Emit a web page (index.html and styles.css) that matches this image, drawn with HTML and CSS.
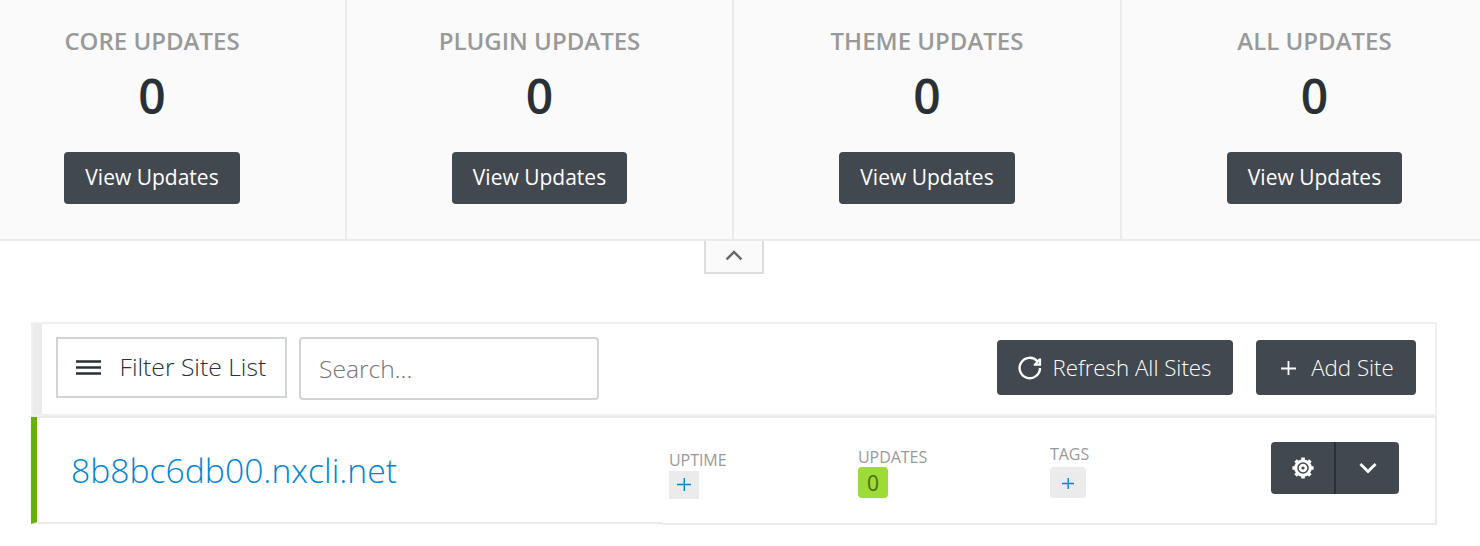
FILE: index.html
```html
<!DOCTYPE html>
<html lang="en">
<head>
  <meta charset="UTF-8">
  <title>Sites</title>
  <link rel="stylesheet" href="styles.css">
</head>
<body>
  <!-- Update totals -->
  <section class="totals">
    <div class="total">
      <h3>CORE UPDATES</h3>
      <div class="count">0</div>
      <a class="btn btn-view">View Updates</a>
    </div>
    <div class="total">
      <h3>PLUGIN UPDATES</h3>
      <div class="count">0</div>
      <a class="btn btn-view">View Updates</a>
    </div>
    <div class="total">
      <h3>THEME UPDATES</h3>
      <div class="count">0</div>
      <a class="btn btn-view">View Updates</a>
    </div>
    <div class="total">
      <h3>ALL UPDATES</h3>
      <div class="count">0</div>
      <a class="btn btn-view">View Updates</a>
    </div>
  </section>
  <div class="collapse">
    <svg width="18" height="11" viewBox="0 0 18 11"><path d="M1.6 9.4 9 2l7.4 7.4" fill="none" stroke="#666" stroke-width="2.4"/></svg>
  </div>

  <main class="sites">
    <!-- Toolbar -->
    <div class="toolbar">
      <div class="btn-filter">
        <svg width="25" height="16" viewBox="0 0 25 16"><path d="M0 1.5h25M0 7.5h25M0 13.5h25" stroke="#293036" stroke-width="2.3"/></svg>
        <span>Filter Site List</span>
      </div>
      <input class="search" type="text" placeholder="Search...">
      <div class="actions">
        <a class="btn btn-refresh">
          <svg width="24" height="24" viewBox="0 0 24 24"><path d="M22 12A10.2 10.2 0 1 1 19.4 5.2" fill="none" stroke="#fff" stroke-width="2.4"/><path d="M22 2.6v6h-6.2M21.5 3.5l-4 4.4" fill="none" stroke="#fff" stroke-width="2.2"/></svg>
          <span>Refresh All Sites</span>
        </a>
        <a class="btn btn-add">
          <svg width="15" height="15" viewBox="0 0 15 15"><path d="M0 8.5h15M7.5 1v14" stroke="#fff" stroke-width="1.8"/></svg>
          <span>Add Site</span>
        </a>
      </div>
    </div>

    <!-- Site row -->
    <div class="site">
      <div class="site-name"><a>8b8bc6db00.nxcli.net</a></div>
      <div class="site-info">
        <div class="cell uptime">
          <label>UPTIME</label>
          <span class="plus"><svg width="14" height="14" viewBox="0 0 14 14"><path d="M0 6.5h14M7.3 0v13" stroke="#0085d5" stroke-width="1.4"/></svg></span>
        </div>
        <div class="cell updates">
          <label>UPDATES</label>
          <span class="badge">0</span>
        </div>
        <div class="cell tags">
          <label>TAGS</label>
          <span class="plus"><svg width="12" height="12" viewBox="0 0 12 12"><path d="M0 6.5h12M6.2 1v11" stroke="#0085d5" stroke-width="1.4"/></svg></span>
        </div>
        <div class="btn-group">
          <a class="btn">
            <svg width="22" height="22" viewBox="-11 -11 22 22">
              <circle r="8.8" fill="#fff"/>
              <path d="M0-10.6V10.6M-10.6 0H10.6M-7.4-7.4 7.4 7.4M7.4-7.4-7.4 7.4" stroke="#fff" stroke-width="3.6"/>
              <circle r="5" fill="none" stroke="#42484f" stroke-width="1.5"/>
              <circle r="1.6" fill="#42484f"/>
            </svg>
          </a>
          <a class="btn">
            <svg width="18" height="12" viewBox="0 0 18 12"><path d="M1.4 2 9 9.6 16.6 2" fill="none" stroke="#fff" stroke-width="2.8"/></svg>
          </a>
        </div>
      </div>
    </div>
  </main>
</body>
</html>
```

FILE: styles.css
```css
body {
  margin: 0;
  font-family: 'Open Sans', sans-serif;
  font-weight: 300;
  color: #293036;
  background: #fff;
  overflow: hidden;
}

svg {
  display: block;
  flex: none;
}

.btn {
  display: flex;
  align-items: center;
  justify-content: center;
  box-sizing: border-box;
  background: #42484f;
  color: #fff;
  border-radius: 4px;
  white-space: nowrap;
}

/* Update totals */
.totals {
  display: grid;
  grid-template-columns: repeat(4, 387.5px);
  margin-left: -40.75px;
  height: 239px;
  background: #fafafa;
  border-bottom: 2px solid #ebebeb;
}

.total {
  display: flex;
  flex-direction: column;
  align-items: center;
  border-right: 2px solid #ebebeb;
}

.total h3 {
  margin: 24px 0 0;
  font-size: 24px;
  line-height: 33px;
  font-weight: 600;
  color: #999;
}

.count {
  font-size: 48px;
  line-height: 66px;
  margin-top: 6px;
  font-weight: 600;
}

.btn-view {
  width: 175.5px;
  height: 52px;
  margin-top: 23px;
  padding-bottom: 2px;
  font-size: 21px;
  font-weight: 400;
}

.collapse {
  display: flex;
  justify-content: center;
  box-sizing: border-box;
  width: 60px;
  height: 33px;
  padding-top: 9px;
  margin-left: 704px;
  border: 2px solid #ddd;
  border-top: 0;
  background: #fafafa;
}

/* Toolbar */
.sites {
  width: 1406px;
  margin: 48px 0 0 31px;
}

.toolbar {
  display: flex;
  align-items: flex-start;
  box-sizing: border-box;
  height: 94px;
  padding: 13px 19px 0 23px;
  border: 2px solid #f0f0f0;
  box-shadow: inset 9px 0 #ebebeb;
}

.btn-filter {
  display: flex;
  align-items: center;
  box-sizing: border-box;
  width: 231px;
  height: 61px;
  padding-left: 18px;
  border: 2px solid #d0d4d8;
  font-size: 24.7px;
}

.btn-filter span {
  margin-left: 18.5px;
  padding-bottom: 2px;
}

.search {
  box-sizing: border-box;
  width: 300px;
  height: 63px;
  margin-left: 12px;
  padding: 0 18px;
  border: 2px solid #d0d4d8;
  border-radius: 4px;
  font: 300 24.6px 'Open Sans', sans-serif;
}

.search::placeholder {
  color: #757575;
}

.actions {
  display: flex;
  gap: 23px;
  margin: 3px 0 0 auto;
  font-size: 22.3px;
}

.actions .btn {
  height: 55px;
}

.btn-refresh {
  width: 236px;
  gap: 10px;
}

.btn-add {
  width: 160px;
  gap: 15px;
  padding-left: 3px;
}

/* Site row */
.site {
  display: flex;
  align-items: flex-start;
  border-top: 1px solid #ebebeb;
}

.site-name {
  display: flex;
  align-items: center;
  box-sizing: border-box;
  width: 632px;
  height: 107px;
  padding-left: 34px;
  border-bottom: 2px solid #ebebeb;
  border-left: 6px solid #67b100;
  box-shadow: inset 0 1px #ebebeb;
  font-size: 33.7px;
  color: #0085d5;
}

.site-info {
  display: flex;
  flex: 1;
  align-items: flex-start;
  box-sizing: border-box;
  height: 108px;
  padding-left: 6px;
  border: 2px solid #ebebeb;
  border-top-width: 1px;
  border-left: 0;
}

.cell label {
  display: block;
  font-size: 16px;
  line-height: 22px;
  font-weight: 400;
  letter-spacing: -0.05px;
  color: #999;
}

.uptime {
  width: 189px;
  padding-top: 31px;
}

.updates {
  width: 192px;
  padding-top: 28px;
}

.tags {
  width: 221px;
  padding-top: 25px;
}

.plus,
.badge {
  display: flex;
  align-items: center;
  justify-content: center;
  width: 30px;
  height: 28px;
  background: #ebebeb;
}

.tags .plus {
  width: 36px;
  height: 31px;
  margin-top: 2px;
  border-radius: 4px;
}

.badge {
  height: 31px;
  margin-top: -1px;
  border-radius: 4px;
  background: #9cdb38;
  color: #4a6d12;
  font-size: 21px;
  font-weight: 400;
}

.btn-group {
  display: flex;
  margin-top: 24px;
}

.btn-group .btn {
  width: 65px;
  height: 52px;
  border-radius: 4px 0 0 4px;
  border-right: 2px solid #293036;
}

.btn-group .btn:last-child {
  width: 63px;
  border-radius: 0 4px 4px 0;
  border-right: 0;
}
```
